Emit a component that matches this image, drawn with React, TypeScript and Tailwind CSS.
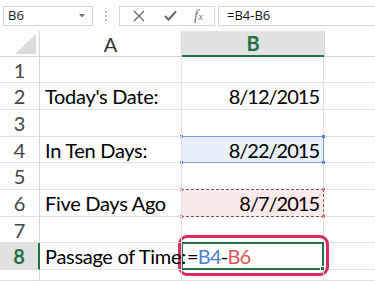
import React from "react";

const font = { fontFamily: "Lato, 'Open Sans', sans-serif" };

const rowHeights = [26, 27, 27, 26, 27, 27, 26, 27, 11];

export default function App() {
  const rows: { label?: string; value?: string; kind?: string }[] = [
    {},
    { label: "Today's Date:", value: "8/12/2015" },
    {},
    { label: "In Ten Days:", value: "8/22/2015", kind: "blue" },
    {},
    { label: "Five Days Ago", value: "8/7/2015", kind: "red" },
    {},
    { label: "Passage of Time:", kind: "formula" },
    {},
  ];
  return (
    <div className="w-[375px] h-[281px] overflow-hidden bg-white relative" style={font}>
      {/* formula bar */}
      <div className="h-[31px] flex items-center bg-white">
        <div className="ml-[3px] w-[90px] h-[20px] border border-[#d4d4d4] flex items-center justify-between px-[4px] text-[13px] text-[#222]" style={{ fontFamily: "'Segoe UI', 'Open Sans', sans-serif" }}>
          <span>B6</span>
          <svg width="6" height="4" viewBox="0 0 6 4" className="mr-[3px]"><path d="M0 0 L6 0 L3 3.5 Z" fill="#777" /></svg>
        </div>
        <div className="w-[26px] flex flex-col items-center gap-[2px]">
          <div className="w-[2px] h-[2px] bg-[#bbb]" />
          <div className="w-[2px] h-[2px] bg-[#bbb]" />
          <div className="w-[2px] h-[2px] bg-[#bbb]" />
        </div>
        <div className="w-[96px] h-[20px] border border-[#d4d4d4] flex items-center">
          <svg width="12" height="12" viewBox="0 0 12 12" className="ml-[13px]"><path d="M1 1 L11 11 M11 1 L1 11" stroke="#666" strokeWidth="1.3" /></svg>
          <svg width="13" height="11" viewBox="0 0 13 11" className="ml-[19px]"><path d="M1 6 L4.5 9.5 L12 1.5" stroke="#666" strokeWidth="2" fill="none" /></svg>
          <span className="ml-[17px] text-[15px] italic text-[#777]" style={{ fontFamily: "'Liberation Serif', serif" }}>f<span className="text-[11px]">x</span></span>
        </div>
        <div className="ml-[3px] flex-1 h-[20px] border border-r-0 border-[#d4d4d4] flex items-center pl-[8px] text-[13px] text-[#111]" style={{ fontFamily: "'Segoe UI', 'Open Sans', sans-serif" }}>
          =B4-B6
        </div>
      </div>
      {/* grid */}
      <div className="grid grid-cols-[40px_142px_142px_1fr]">
        {/* header row */}
        <div className="h-[26px] border-r border-b border-[#d4d4d4] flex items-end justify-end pr-[3px] pb-[2px]">
          <svg width="21" height="20" viewBox="0 0 21 20"><path d="M21 0 L21 20 L0 20 Z" fill="#dcdcdc" /></svg>
        </div>
        <div className="h-[26px] border-r border-b border-[#d4d4d4] flex items-center justify-center text-[20px] text-[#333] font-normal">A</div>
        <div className="h-[26px] bg-[#e1e1e1] border-b-2 border-[#217346] flex items-center justify-center text-[20px] font-bold text-[#217346]">B</div>
        <div className="h-[26px] border-l border-b border-[#d4d4d4]" />
        {rows.map((r, i) => {
          const h = rowHeights[i];
          const sel = r.kind === "formula";
          const last = i === rows.length - 1;
          return (
            <React.Fragment key={i}>
              <div
                className={`flex justify-center text-[20px] border-b border-[#e1e1e1] ${last ? "items-start pt-[8px]" : "items-center"} ${sel ? "bg-[#e1e1e1] text-[#217346] font-bold border-r-2 border-r-[#217346]" : "text-[#444] border-r border-r-[#d4d4d4]"}`}
                style={{ height: h }}
              >
                {i + 1}
              </div>
              <div className="border-r border-b border-[#e1e1e1] flex items-center pl-[5px] text-[20px] tracking-[-0.3px] text-black whitespace-nowrap overflow-visible relative z-10" style={{ height: h }}>
                {r.label}
              </div>
              <div className="border-r border-b border-[#e1e1e1] relative" style={{ height: h }}>
                {r.kind === "blue" && (
                  <div className="absolute inset-[-1px] bg-[#eaf0fb] border border-[#7a9de0]">
                    <div className="absolute -left-[2px] -top-[2px] w-[3px] h-[3px] bg-[#5a80d4]" />
                    <div className="absolute -right-[2px] -top-[2px] w-[3px] h-[3px] bg-[#5a80d4]" />
                    <div className="absolute -left-[2px] -bottom-[2px] w-[3px] h-[3px] bg-[#5a80d4]" />
                    <div className="absolute -right-[2px] -bottom-[2px] w-[3px] h-[3px] bg-[#5a80d4]" />
                  </div>
                )}
                {r.kind === "red" && (
                  <div className="absolute inset-[-1px] bg-[#fbeaea] border border-dashed border-[#6b5a5a]">
                    <div className="absolute -left-[2px] -top-[2px] w-[3px] h-[3px] bg-[#e07a7a]" />
                    <div className="absolute -right-[2px] -top-[2px] w-[3px] h-[3px] bg-[#e07a7a]" />
                    <div className="absolute -left-[2px] -bottom-[2px] w-[3px] h-[3px] bg-[#e07a7a]" />
                    <div className="absolute -right-[2px] -bottom-[2px] w-[3px] h-[3px] bg-[#e07a7a]" />
                  </div>
                )}
                {r.kind === "formula" && (
                  <>
                    <div className="absolute inset-[-1px] border-2 border-[#217346] bg-white">
                      <div className="absolute -right-[3px] -bottom-[3px] w-[5px] h-[5px] bg-[#217346] border border-white" />
                    </div>
                    <div className="absolute left-[-4px] right-[-6px] top-[-8px] bottom-[-7px] border-[3px] border-[#dc2a5c] rounded-[9px]" />
                  </>
                )}
                {r.value && (
                  <div className="absolute inset-0 flex items-center justify-end pr-[4px] text-[20px] tracking-[-1px] text-black">{r.value}</div>
                )}
                {r.kind === "formula" && (
                  <div className="absolute inset-0 flex items-center pl-[5px] text-[20px] tracking-[-0.8px] z-20">
                    <span className="text-black">=</span>
                    <span className="text-[#4a7fd6]">B4</span>
                    <span className="text-black">-</span>
                    <span className="text-[#e0575a]">B6</span>
                  </div>
                )}
              </div>
              <div className="border-b border-[#e1e1e1]" style={{ height: h }} />
            </React.Fragment>
          );
        })}
      </div>
    </div>
  );
}
